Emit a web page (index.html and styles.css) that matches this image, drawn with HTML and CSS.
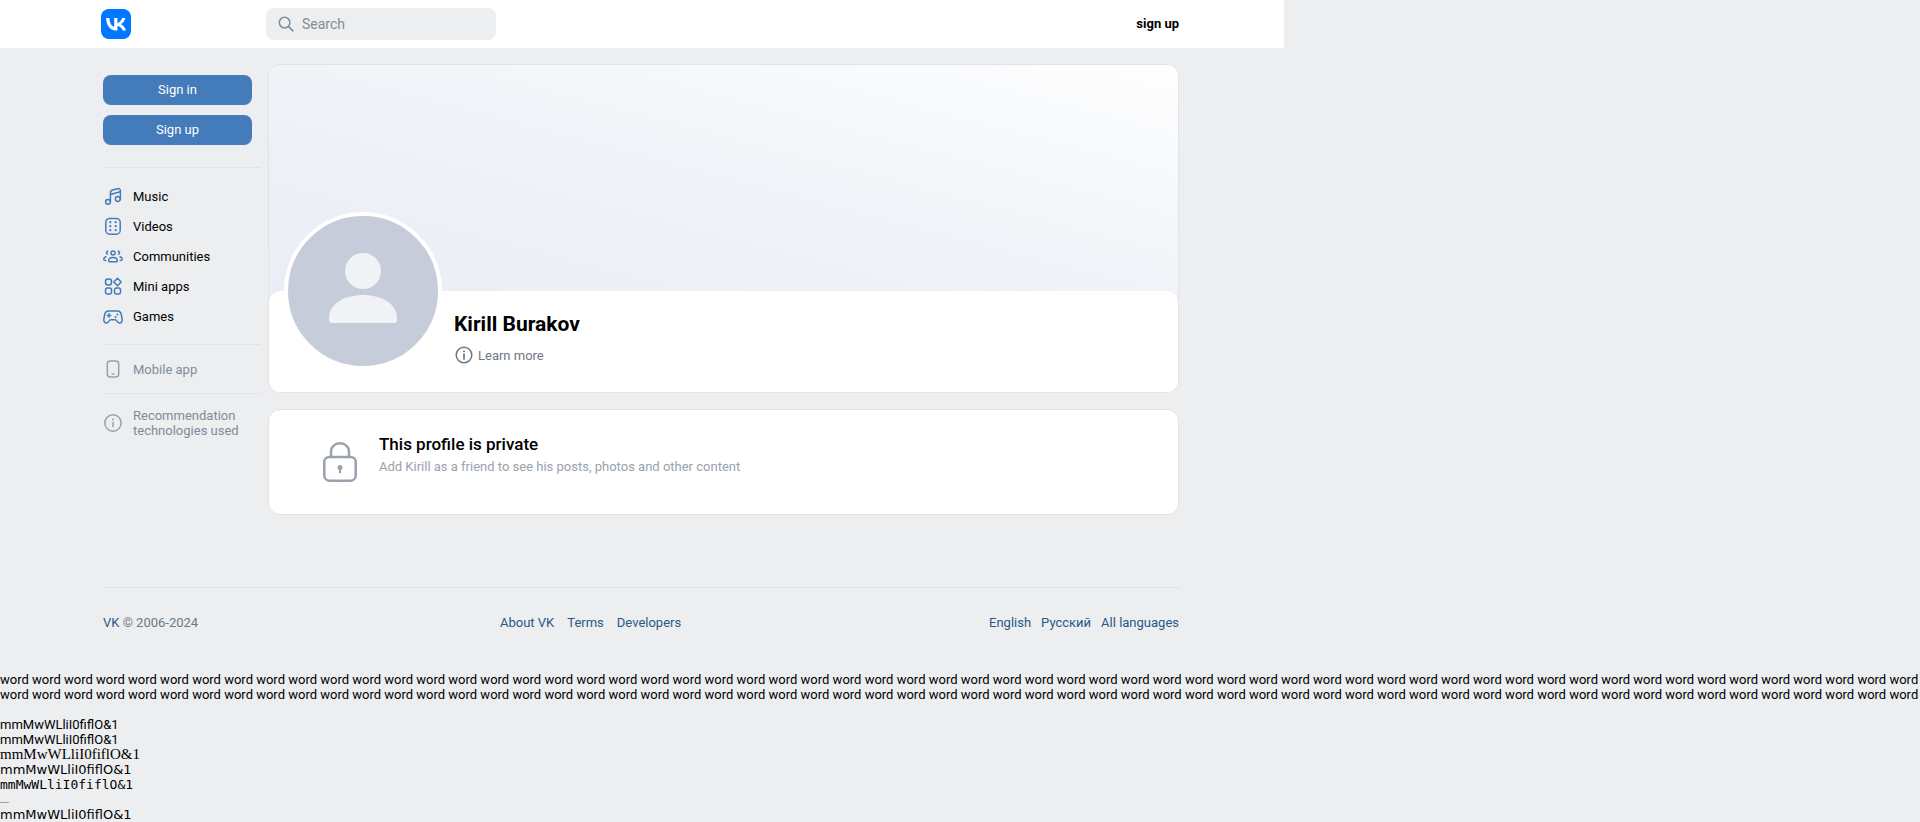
FILE: index.html
```html
<!DOCTYPE html>
<html>
<head>
    <title>Kirill Burakov | VK</title>
    <link rel="stylesheet" href="styles.css">
</head>
<body>
    <header class="top-bar">
        <svg class="logo" viewBox="0 0 30 30" width="30" height="30">
            <rect width="30" height="30" rx="8" fill="#0077ff"/>
            <path d="M16 21.6C9.200 21.600 5.300 16.900 5.100 9h3.400c.1 5.800 2.700 8.300 4.700 8.800V9h3.200v5c2-.2 4-2.500 4.700-5h3.200c-.5 3.100-2.800 5.400-4.400 6.300 1.600.8 4.200 2.700 5.200 6.300h-3.500c-.8-2.400-2.700-4.200-5.200-4.500v4.500z" fill="#fff"/>
        </svg>
        <div class="search">
            <svg class="search-icon" viewBox="0 0 16 16" width="16" height="16">
                <circle cx="6.600" cy="6.600" r="5.300" fill="none" stroke="#818c99" stroke-width="1.500"/>
                <path d="M10.600 10.600l4.300 4.300" stroke="#818c99" stroke-width="1.500" stroke-linecap="round"/>
            </svg>
            <span>Search</span>
        </div>
        <a class="top-link">sign up</a>
    </header>

    <div class="page">
        <aside class="side">
            <div class="side-btn">Sign in</div>
            <div class="side-btn">Sign up</div>
            <div class="side-sep side-sep-first"></div>
            <div class="side-item">
                <svg viewBox="0 0 20 20" width="20" height="20" class="side-icon">
                    <circle cx="5" cy="15.800" r="2.400"/><circle cx="14.800" cy="13" r="2.400"/>
                    <path d="M7.400 15.800V7c0-1.700.6-2.600 2.200-3l5-1.300c1.700-.4 2.800.5 2.800 2V13M7.400 8.500l9.800-2.700"/>
                </svg>
                <span>Music</span>
            </div>
            <div class="side-item">
                <svg viewBox="0 0 20 20" width="20" height="20" class="side-icon">
                    <rect x="2.800" y="2.400" width="14.400" height="15.800" rx="4"/>
                    <g class="dots"><circle cx="7.300" cy="6.200" r="1.100"/><circle cx="12.700" cy="6.200" r="1.100"/><circle cx="7.300" cy="10.200" r="1.100"/><circle cx="12.700" cy="10.200" r="1.100"/><circle cx="7.300" cy="14.200" r="1.100"/><circle cx="12.700" cy="14.200" r="1.100"/></g>
                </svg>
                <span>Videos</span>
            </div>
            <div class="side-item">
                <svg viewBox="0 0 20 20" width="20" height="20" class="side-icon">
                    <circle cx="10" cy="7" r="2"/>
                    <path d="M5.700 14.700c0-1.900 2-3.100 4.300-3.100s4.300 1.200 4.300 3.100c0 .9-.7 1.100-1.400 1.100H7.100c-.7 0-1.400-.2-1.400-1.100z"/>
                    <path d="M4.700 5.200c-1.300.2-1.700 2.200-.3 2.900M15.300 5.200c1.300.2 1.700 2.200.3 2.900M2.900 10.800C1.200 11.500.5 12.800 1 13.800c.3.500 1 .6 1.800.6M17.100 10.800c1.700.7 2.400 2 1.900 3-.3.500-1 .6-1.800.6"/>
                </svg>
                <span>Communities</span>
            </div>
            <div class="side-item">
                <svg viewBox="0 0 20 20" width="20" height="20" class="side-icon">
                    <rect x="2.500" y="3" width="6" height="6" rx="2.500"/>
                    <path d="M14.500 2.300l3.700 3.700-3.700 3.700-3.700-3.700z" stroke-linejoin="round"/>
                    <rect x="2.500" y="12" width="6" height="6" rx="2"/>
                    <rect x="11.500" y="12" width="6" height="6" rx="2"/>
                </svg>
                <span>Mini apps</span>
            </div>
            <div class="side-item">
                <svg viewBox="0 0 20 20" width="20" height="20" class="side-icon">
                    <g transform="translate(0 1.300)">
                        <path d="M5.500 3.700h9c2.200 0 3.300 1.300 3.800 3.500l.8 4.300c.5 2.700-1 4.300-2.500 4.300-1 0-1.600-.6-2.200-1.500-.6-1-1.200-1.800-2.400-1.800H8c-1.200 0-1.800.8-2.400 1.800-.6.900-1.200 1.500-2.200 1.500-1.500 0-3-1.600-2.500-4.300l.8-4.300c.5-2.200 1.600-3.500 3.800-3.500z"/>
                        <path d="M6 6.500v3.500M4.300 8.200h3.500"/>
                        <circle class="dot" cx="12.500" cy="9.800" r="1"/><circle class="dot" cx="14.500" cy="7.300" r="1"/>
                    </g>
                </svg>
                <span>Games</span>
            </div>
            <div class="side-sep side-sep-nav"></div>
            <div class="side-item side-item-muted">
                <svg viewBox="0 0 20 20" width="20" height="20" class="side-icon">
                    <rect x="4.300" y="2" width="11.400" height="16" rx="3"/>
                    <path d="M9.300 15h1.400"/>
                </svg>
                <span>Mobile app</span>
            </div>
            <div class="side-sep side-sep-mobile"></div>
            <div class="side-item side-item-muted">
                <svg viewBox="0 0 20 20" width="20" height="20" class="side-icon">
                    <circle cx="10" cy="10" r="8.200"/>
                    <path d="M10 9.500v4.300"/>
                    <circle class="dot" cx="10" cy="6.500" r="1"/>
                </svg>
                <span>Recommendation technologies used</span>
            </div>
        </aside>

        <main class="content">
            <section class="card profile">
                <div class="cover"></div>
                <div class="profile-body">
                    <div class="avatar">
                        <svg viewBox="0 0 150 150" width="150" height="150">
                            <circle cx="75" cy="55" r="18" fill="#f0f2f5"/>
                            <path d="M41 102c0-14 15-23 34-23s34 9 34 23v2c0 2-1 3-3 3H44c-2 0-3-1-3-3z" fill="#f0f2f5"/>
                        </svg>
                    </div>
                    <div class="profile-info">
                        <h1 class="profile-name">Kirill Burakov</h1>
                        <div class="learn-more">
                            <svg class="learn-icon" viewBox="0 0 18 18" width="18" height="18">
                                <circle cx="9" cy="9" r="7.800" fill="none" stroke="#6f7680" stroke-width="1.500"/>
                                <path d="M9 8.300v4.600" stroke="#6f7680" stroke-width="1.700" stroke-linecap="round"/>
                                <circle cx="9" cy="5.500" r="1" fill="#6f7680"/>
                            </svg>
                            <span>Learn more</span>
                        </div>
                    </div>
                </div>
            </section>

            <section class="card private">
                <svg class="lock" viewBox="0 0 34 40" width="34" height="40">
                    <path d="M8 16V10C8 4.500 12 1.300 17 1.300S26 4.500 26 10v6" fill="none" stroke="#99a2ad" stroke-width="2.500"/>
                    <rect x="1.300" y="15" width="31.400" height="23.700" rx="5" fill="none" stroke="#99a2ad" stroke-width="2.500"/>
                    <circle cx="17" cy="25.500" r="2.500" fill="#99a2ad"/>
                    <path d="M17 26v4.500" stroke="#99a2ad" stroke-width="2" stroke-linecap="round"/>
                </svg>
                <div class="private-copy">
                    <h2 class="private-title">This profile is private</h2>
                    <p class="private-text">Add Kirill as a friend to see his posts, photos and other content</p>
                </div>
            </section>
        </main>
    </div>

    <footer class="foot">
        <div class="foot-left"><a>VK</a> © 2006-2024</div>
        <div class="foot-links"><a>About VK</a><a>Terms</a><a>Developers</a></div>
        <div class="foot-links foot-right"><a>English</a><a>Русский</a><a>All languages</a></div>
    </footer>

    <div class="measure">
        <p class="words">word word word word word word word word word word word word word word word word word word word word word word word word word word word word word word word word word word word word word word word word word word word word word word word word word word word word word word word word word word word word word word word word word word word word word word word word word word word word word word word word word word word word word word word word word word word word word word word word word word word word word word word word word word word word word word word word word word word word word word word word</p>
        <div class="m-roboto">mmMwWLliI0fiflO&amp;1</div>
        <div class="m-roboto">mmMwWLliI0fiflO&amp;1</div>
        <div class="m-serif">mmMwWLliI0fiflO&amp;1</div>
        <div class="m-sans">mmMwWLliI0fiflO&amp;1</div>
        <div class="m-mono">mmMwWLliI0fiflO&amp;1</div>
        <div class="m-tiny">mmMwWLliI0fiflO&amp;1</div>
        <div class="m-sans">mmMwWLliI0fiflO&amp;1</div>
    </div>
</body>
</html>
```

FILE: styles.css
```css
body {
    margin: 0;
    background-color: #eceef0;
    color: #000;
    font-family: Roboto, "Liberation Sans", sans-serif;
    font-size: 13px;
    line-height: 15px;
    overflow: hidden;
}
.top-bar {
    display: flex;
    align-items: center;
    width: 1284px;
    height: 48px;
    box-sizing: border-box;
    padding: 0 105px 0 101px;
    background-color: #fff;
}
.logo {
    margin-right: 135px;
}
.search {
    display: flex;
    align-items: center;
    gap: 8px;
    width: 230px;
    height: 32px;
    box-sizing: border-box;
    padding-left: 12px;
    border-radius: 8px;
    background-color: #eceef0;
    color: #818c99;
    font-size: 14px;
}
.top-link {
    margin: 0 0 1px auto;
    font-weight: 700;
}
.page {
    display: grid;
    grid-template-columns: 157px 911px;
    gap: 8px;
    margin: 16px 0 0 103px;
}
.side {
    padding-top: 11px;
}
.side-btn {
    width: 149px;
    height: 30px;
    margin-bottom: 10px;
    border-radius: 8px;
    background-color: #447bba;
    color: #fff;
    line-height: 30px;
    text-align: center;
}
.side-sep {
    height: 1px;
    background-color: #e1e3e6;
}
.side-sep-first {
    margin: 22px 0 13px;
}
.side-sep-nav {
    margin: 13px 0 9px;
}
.side-sep-mobile {
    margin: 9px 0 14px;
}
.side-item {
    display: flex;
    align-items: center;
    gap: 10px;
    height: 30px;
}
.side-item-muted {
    color: #818c99;
}
.side-icon {
    flex-shrink: 0;
    fill: none;
    stroke: #447bba;
    stroke-width: 1.500;
    stroke-linecap: round;
}
.side-icon .dots circle,
.side-icon .dot {
    fill: #447bba;
    stroke: none;
}
.side-item-muted .side-icon {
    stroke: #99a2ad;
}
.side-item-muted .side-icon .dot {
    fill: #99a2ad;
}
.card {
    box-sizing: border-box;
    border: 1px solid #e1e3e6;
    border-radius: 12px;
    background-color: #fff;
}
.profile {
    height: 329px;
    overflow: hidden;
}
.cover {
    height: 238px;
    background: linear-gradient(to bottom left, #fefefe 0%, #f0f3f8 50%, #e9edf5 100%);
}
.profile-body {
    display: flex;
    height: 102px;
    margin-top: -12px;
    padding-left: 15px;
    border-radius: 12px 12px 0 0;
    background-color: #fff;
}
.avatar {
    flex-shrink: 0;
    width: 150px;
    height: 150px;
    margin-top: -79px;
    border: 4px solid #fff;
    border-radius: 50%;
    background-color: #c6ccda;
}
.profile-info {
    margin-left: 12px;
    padding-top: 20px;
}
.profile-name {
    margin: 0 0 9px;
    font-size: 21px;
    line-height: 26px;
    font-weight: 700;
}
.learn-more {
    display: flex;
    align-items: center;
    gap: 5px;
    color: #6f7680;
}
.learn-icon {
    margin-left: 1px;
}
.private {
    display: flex;
    align-items: center;
    gap: 22px;
    height: 106px;
    margin-top: 16px;
    padding-left: 54px;
}
.private-copy {
    margin-bottom: 17px;
}
.private-title {
    margin: 0 0 5px;
    font-size: 17px;
    line-height: 20px;
    font-weight: 500;
}
.private-text {
    margin: 0;
    color: #99a2ad;
}
.foot {
    display: grid;
    grid-template-columns: 397px auto 1fr;
    width: 1077px;
    height: 60px;
    box-sizing: border-box;
    margin: 72px 0 0 103px;
    padding: 27px 1px 0 0;
    border-top: 1px solid #e1e3e6;
    color: #6d7885;
}
.foot a {
    color: #2a5885;
}
.foot-links {
    display: flex;
    gap: 13px;
}
.foot-right {
    justify-content: flex-end;
    gap: 10px;
}
.measure {
    margin-top: 25px;
}
.words {
    margin: 0 0 15px;
}
.m-serif {
    font-family: "Liberation Serif", serif;
    font-size: 15px;
}
.m-sans {
    font-family: "DejaVu Sans", sans-serif;
}
.m-mono {
    font-family: "DejaVu Sans Mono", monospace;
}
.m-tiny {
    height: 15px;
    font-size: 1px;
    line-height: 21px;
}
```
